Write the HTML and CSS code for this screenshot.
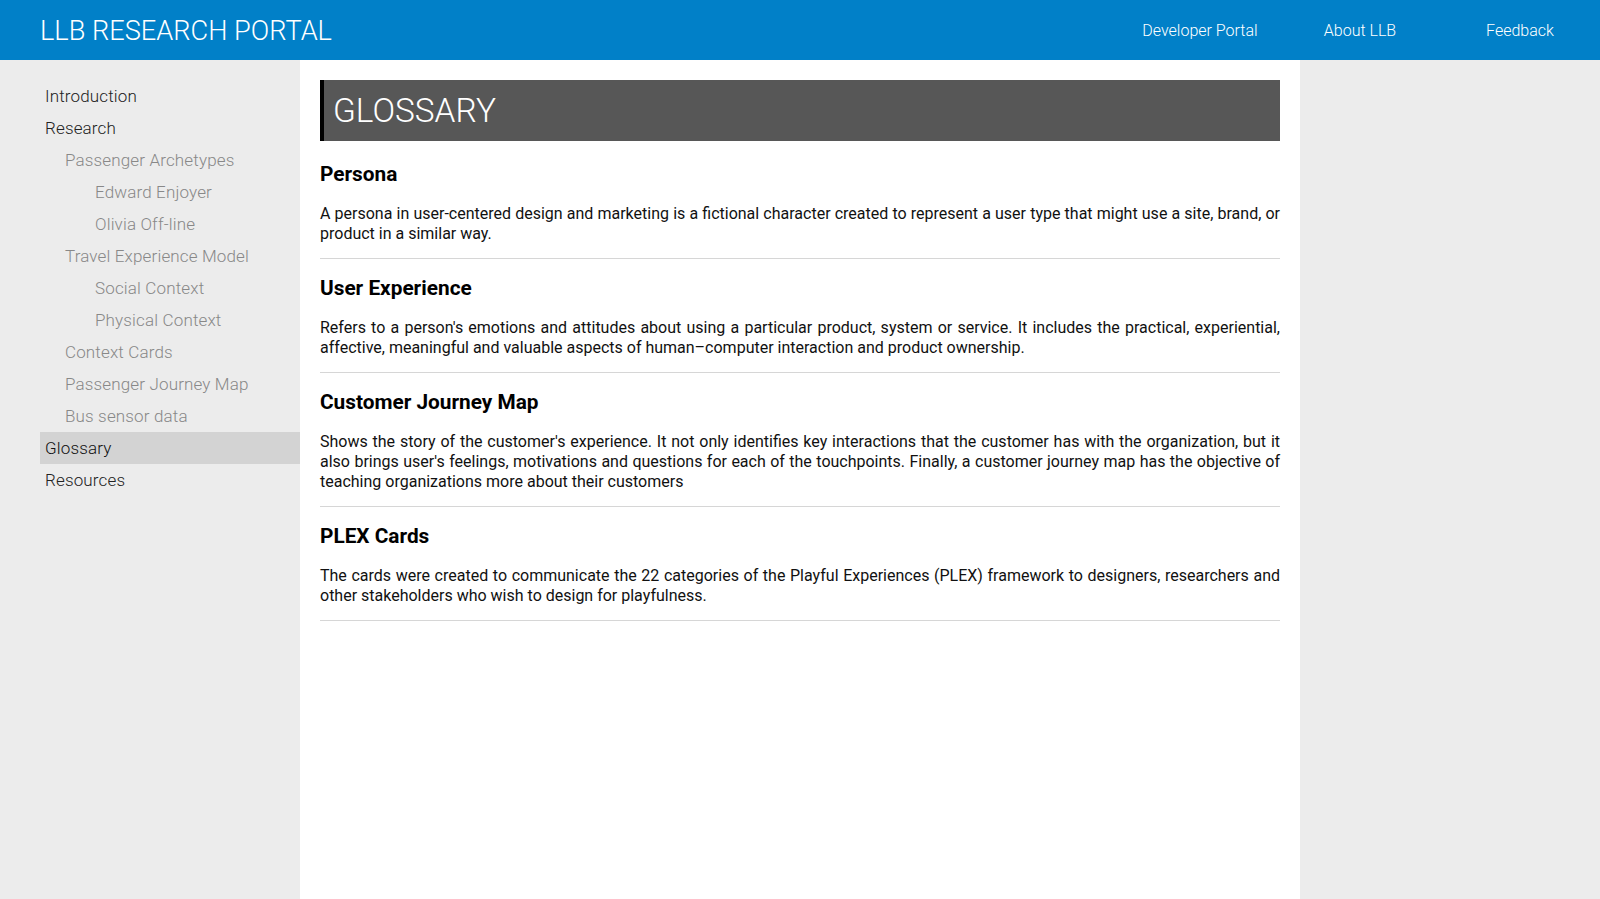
FILE: index.html
```html
<!DOCTYPE html>
<html lang="en">
<head>
<meta charset="utf-8">
<title>LLB Research Portal - Glossary</title>
<link rel="stylesheet" href="styles.css">
</head>
<body>
<header class="topbar">
  <div class="brand">LLB RESEARCH PORTAL</div>
  <nav class="topnav">
    <a class="topnav-item" href="#">Developer Portal</a>
    <a class="topnav-item" href="#">About LLB</a>
    <a class="topnav-item" href="#">Feedback</a>
  </nav>
</header>
<div class="layout">
  <aside class="sidebar">
    <ul class="menu">
      <li class="menu-item lvl1">Introduction</li>
      <li class="menu-item lvl1">Research</li>
      <li class="menu-item lvl2">Passenger Archetypes</li>
      <li class="menu-item lvl3">Edward Enjoyer</li>
      <li class="menu-item lvl3">Olivia Off-line</li>
      <li class="menu-item lvl2">Travel Experience Model</li>
      <li class="menu-item lvl3">Social Context</li>
      <li class="menu-item lvl3">Physical Context</li>
      <li class="menu-item lvl2">Context Cards</li>
      <li class="menu-item lvl2">Passenger Journey Map</li>
      <li class="menu-item lvl2">Bus sensor data</li>
      <li class="menu-item lvl1 active">Glossary</li>
      <li class="menu-item lvl1">Resources</li>
    </ul>
  </aside>
  <main class="content">
    <h1 class="page-title">GLOSSARY</h1>
    <section class="term">
      <h3 class="term-name">Persona</h3>
      <p class="term-desc">A persona in user-centered design and marketing is a fictional character created to represent a user type that might use a site, brand, or product in a similar way.</p>
    </section>
    <hr class="divider">
    <section class="term">
      <h3 class="term-name">User Experience</h3>
      <p class="term-desc">Refers to a person's emotions and attitudes about using a particular product, system or service. It includes the practical, experiential, affective, meaningful and valuable aspects of human–computer interaction and product ownership.</p>
    </section>
    <hr class="divider">
    <section class="term">
      <h3 class="term-name">Customer Journey Map</h3>
      <p class="term-desc">Shows the story of the customer's experience. It not only identifies key interactions that the customer has with the organization, but it also brings user's feelings, motivations and questions for each of the touchpoints. Finally, a customer journey map has the objective of teaching organizations more about their customers</p>
    </section>
    <hr class="divider">
    <section class="term">
      <h3 class="term-name">PLEX Cards</h3>
      <p class="term-desc">The cards were created to communicate the 22 categories of the Playful Experiences (PLEX) framework to designers, researchers and other stakeholders who wish to design for playfulness.</p>
    </section>
    <hr class="divider">
  </main>
  <div class="aside-right"></div>
</div>
</body>
</html>
```

FILE: styles.css
```css
* { box-sizing: border-box; }
html, body {
  margin: 0;
  padding: 0;
}
body {
  font-family: Roboto, "Liberation Sans", Arial, sans-serif;
  font-size: 16px;
  color: #000;
  background: #ececec;
}
.topbar {
  height: 60px;
  background: #0180c8;
  display: flex;
  align-items: center;
  justify-content: space-between;
  color: #fff;
}
.brand {
  padding: 3px 0 0 40px;
  font-size: 27.2px;
  font-weight: 300;
  line-height: 57px;
}
.topnav {
  display: flex;
  height: 60px;
}
.topnav-item {
  width: 160px;
  display: flex;
  align-items: center;
  justify-content: center;
  color: #fff;
  text-decoration: none;
  font-size: 16px;
  font-weight: 300;
}
.layout {
  display: flex;
  min-height: calc(100vh - 60px);
}
.sidebar {
  width: 300px;
  flex: none;
  background: #ececec;
  padding: 20px 0 0 40px;
}
.menu {
  list-style: none;
  margin: 0;
  padding: 0;
}
.menu-item {
  height: 32px;
  line-height: 33px;
  font-size: 17px;
  font-weight: 300;
  letter-spacing: 0.15px;
  color: #222;
  padding-left: 5px;
  cursor: pointer;
}
.menu-item.lvl2 {
  padding-left: 25px;
  color: #888;
}
.menu-item.lvl3 {
  padding-left: 55px;
  color: #888;
}
.menu-item.active {
  background: #d3d3d3;
  color: #111;
}
.content {
  width: 1000px;
  flex: none;
  background: #fff;
  padding: 20px;
}
.aside-right {
  flex: 1;
  background: #ececec;
}
.page-title {
  margin: 0 0 21px;
  background: #575757;
  border-left: 4px solid #000;
  color: #fff;
  font-size: 33.4px;
  font-weight: 300;
  line-height: 38px;
  padding: 12px 9px 11px;
}
.term-name {
  margin: 17px 0 18px;
  font-size: 20.8px;
  font-weight: 700;
  line-height: 24px;
}
.term-desc {
  margin: 0 0 14px;
  font-size: 16px;
  line-height: 20px;
  text-align: justify;
  color: #111;
}
.divider {
  margin: 0;
  border: 0;
  border-top: 1px solid #d6d6d6;
  height: 0;
}
```
